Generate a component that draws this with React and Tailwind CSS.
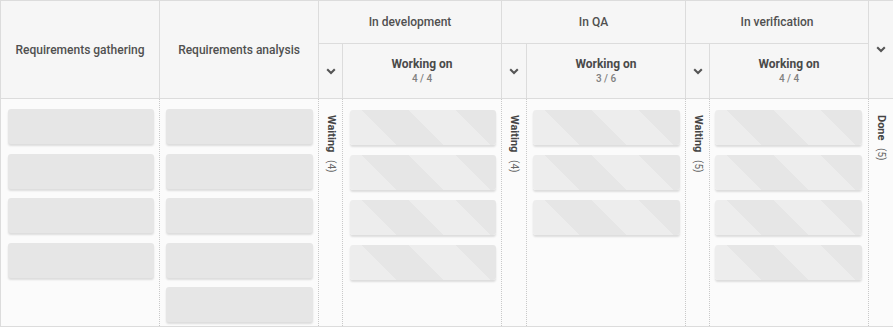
import React from "react";

const font = { fontFamily: "Roboto, 'Liberation Sans', Arial, sans-serif" };

function Chevron() {
  return (
    <svg width="10" height="7" viewBox="0 0 10 7" className="block">
      <path d="M1.2 1.3 L5 5 L8.8 1.3" fill="none" stroke="#555" strokeWidth="2.1" />
    </svg>
  );
}

function Card() {
  return <div className="h-[35px] shrink-0 rounded-[3px] bg-[#e6e6e6] shadow-[0_2px_2px_rgba(0,0,0,0.12)]" />;
}

function StripedCard() {
  return (
    <div className="h-[35px] shrink-0 rounded-[3px] bg-[repeating-linear-gradient(45deg,#ededed_0px,#ededed_33px,#e6e6e6_33px,#e6e6e6_66px)] shadow-[0_2px_2px_rgba(0,0,0,0.12)]" />
  );
}

function Vertical({ label, count }) {
  return (
    <div className="flex justify-center pt-[16px]">
      <div className="[writing-mode:vertical-rl] whitespace-nowrap text-[#444]">
        <span className="text-[11px] font-bold">{label}</span>
        <span className="ms-[8px] text-[10px] text-[#666]">({count})</span>
      </div>
    </div>
  );
}

const hdr = "bg-[#f6f6f6] border-[#dcdcdc] flex items-center justify-center text-[12px] font-medium text-[#505050]";
const body = "bg-[#fbfbfb] border-r border-dotted border-[#c9c9c9]";

function Working({ count }) {
  return (
    <div className={`${hdr} border-r border-b flex-col leading-none`}>
      <div className="font-bold text-[12px] text-[#4a4a4a]">Working on</div>
      <div className="mt-[4px] text-[10px] font-medium text-[#808080]">{count}</div>
    </div>
  );
}

export default function App() {
  return (
    <div style={font} className="w-[893px] h-[327px] border border-[#dcdcdc] bg-[#fbfbfb] grid grid-cols-[159px_159px_24px_159px_25px_159px_24px_159px_1fr] grid-rows-[43px_55px_227px]">
      {/* header row 1 */}
      <div className={`${hdr} row-span-2 border-r border-b`}>Requirements gathering</div>
      <div className={`${hdr} row-span-2 border-r border-b`}>Requirements analysis</div>
      <div className={`${hdr} col-span-2 border-r border-b`}>In development</div>
      <div className={`${hdr} col-span-2 border-r border-b`}>In QA</div>
      <div className={`${hdr} col-span-2 border-r border-b`}>In verification</div>
      <div className={`${hdr} row-span-2 border-b`}>
        <Chevron />
      </div>
      {/* header row 2 */}
      <div className={`${hdr} border-r border-b`}>
        <Chevron />
      </div>
      <Working count="4 / 4" />
      <div className={`${hdr} border-r border-b`}>
        <Chevron />
      </div>
      <Working count="3 / 6" />
      <div className={`${hdr} border-r border-b`}>
        <Chevron />
      </div>
      <Working count="4 / 4" />

      {/* body */}
      <div className={`${body} flex flex-col gap-[9.5px] pt-[10px] pl-[7px] pr-[5px]`}>
        <Card />
        <Card />
        <Card />
        <Card />
      </div>
      <div className={`${body} flex flex-col gap-[9.5px] pt-[10px] pl-[6px] pr-[5px]`}>
        <Card />
        <Card />
        <Card />
        <Card />
        <Card />
      </div>
      <div className={body}>
        <Vertical label="Waiting" count={4} />
      </div>
      <div className={`${body} flex flex-col gap-[10px] pt-[11px] pl-[7px] pr-[5px]`}>
        <StripedCard />
        <StripedCard />
        <StripedCard />
        <StripedCard />
      </div>
      <div className={body}>
        <Vertical label="Waiting" count={4} />
      </div>
      <div className={`${body} flex flex-col gap-[10px] pt-[11px] pl-[6px] pr-[5px]`}>
        <StripedCard />
        <StripedCard />
        <StripedCard />
      </div>
      <div className={body}>
        <Vertical label="Waiting" count={5} />
      </div>
      <div className={`${body} flex flex-col gap-[10px] pt-[11px] pl-[5px] pr-[6px]`}>
        <StripedCard />
        <StripedCard />
        <StripedCard />
        <StripedCard />
      </div>
      <div className="bg-[#fbfbfb]">
        <Vertical label="Done" count={5} />
      </div>
    </div>
  );
}
